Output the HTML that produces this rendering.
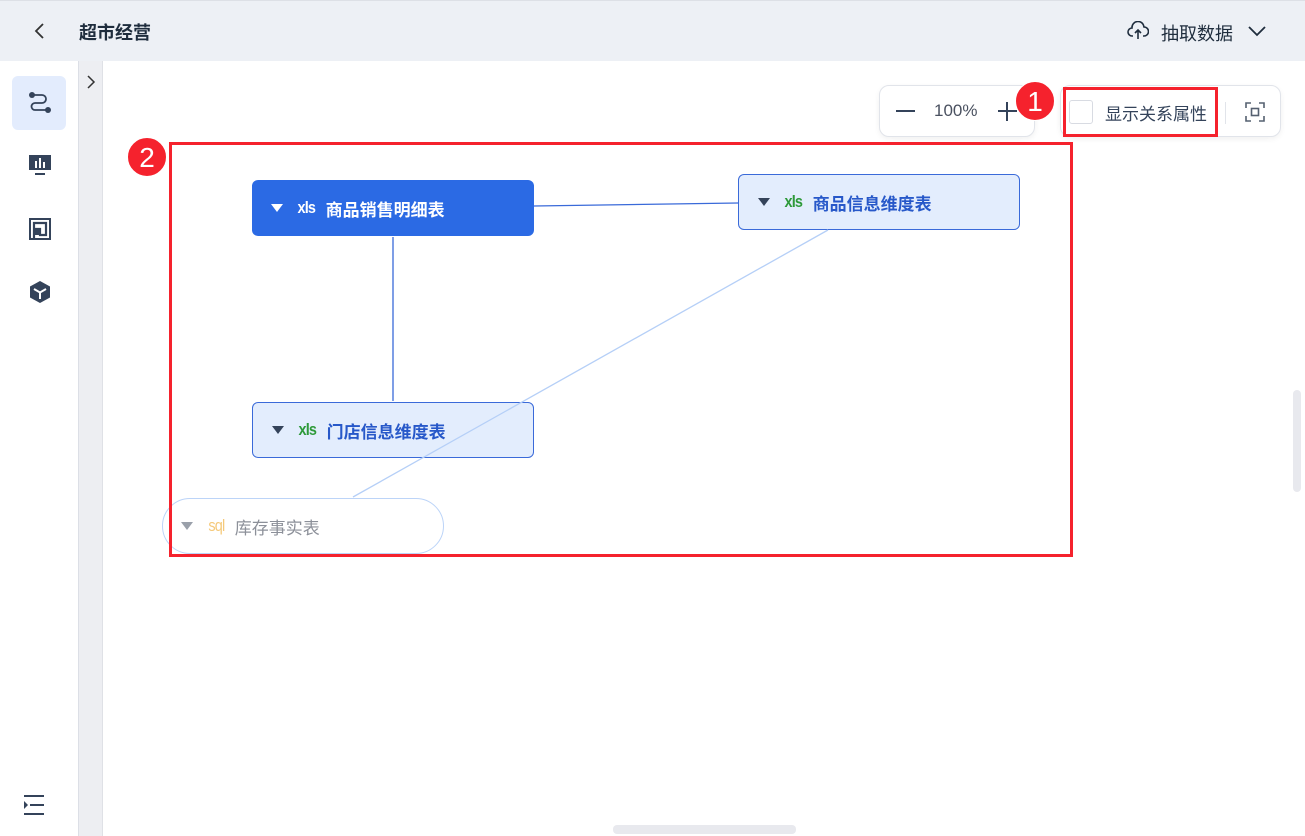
<!DOCTYPE html>
<html><head><meta charset="utf-8"><style>
*{margin:0;padding:0;box-sizing:border-box}
body{width:1305px;height:836px;overflow:hidden;background:#fff;font-family:"Liberation Sans","Noto Sans CJK SC",sans-serif;position:relative}
.abs{position:absolute}
.hdr{left:0;top:0;width:1305px;height:61px;background:#edf0f5;border-top:1px solid #dde0e6}
.node{position:absolute;height:56px;border-radius:6px;display:flex;align-items:center;font-size:17px;font-weight:bold}
.tri{width:0;height:0;border-left:6px solid transparent;border-right:6px solid transparent;border-top:8px solid #fff;margin:0 13px 0 19px}
.tag{font-size:17px;font-weight:bold;margin-right:9px;letter-spacing:-1px;transform:scaleX(.85);display:inline-block}
.badge{position:absolute;width:40px;height:40px;border-radius:50%;background:#f5222d;color:#fff;font-size:28px;text-align:center;line-height:40px;border:1px solid #fff}
</style></head><body>
<div class="abs hdr"></div>
<svg class="abs" style="left:33px;top:22px" width="14" height="18"><path d="M10 2 L3 9 L10 16" stroke="#333" stroke-width="1.8" fill="none"/></svg>
<div class="abs" style="left:79px;top:19px;font-size:18px;font-weight:bold;color:#1f2d3d">超市经营</div>
<svg class="abs" style="left:1127px;top:21px" width="22" height="20" viewBox="0 0 22 20"><path d="M6 15 H5 A4 4 0 0 1 5 7 A6 6 0 0 1 17 6 A4.5 4.5 0 0 1 17 15 H16" stroke="#1f2d3d" stroke-width="1.6" fill="none"/><path d="M11 18 V9 M8 12 L11 9 L14 12" stroke="#1f2d3d" stroke-width="1.6" fill="none"/></svg>
<div class="abs" style="left:1161px;top:20px;font-size:18px;color:#1f2d3d">抽取数据</div>
<svg class="abs" style="left:1247px;top:24px" width="20" height="14"><path d="M2 3 L10 11 L18 3" stroke="#1f2d3d" stroke-width="1.8" fill="none"/></svg>
<div class="abs" style="left:0;top:61px;width:79px;height:775px;background:#fff;border-right:1px solid #dcdfe6"></div>
<div class="abs" style="left:79px;top:61px;width:24px;height:775px;background:#edeef2;border-right:1px solid #dfe1e6"></div>
<svg class="abs" style="left:85px;top:74px" width="12" height="16"><path d="M3 2 L9 8 L3 14" stroke="#333" stroke-width="1.5" fill="none"/></svg>
<div class="abs" style="left:12px;top:76px;width:54px;height:54px;background:#e3ecfd;border-radius:6px"></div>
<svg class="abs" style="left:28px;top:91px" width="24" height="24" viewBox="0 0 24 24"><circle cx="4" cy="4" r="3" fill="#34435a"/><circle cx="20" cy="19" r="3" fill="#34435a"/><path d="M4 4 H14 A4 4 0 0 1 14 12 H7 A3.5 3.5 0 0 0 7 19 H20" stroke="#34435a" stroke-width="1.8" fill="none"/></svg>
<svg class="abs" style="left:29px;top:154px" width="22" height="22"><rect x="0" y="1" width="22" height="15" fill="#34435a"/><rect x="6" y="7" width="2" height="7" fill="#fff"/><rect x="10" y="4" width="2" height="10" fill="#fff"/><rect x="14" y="8" width="2" height="6" fill="#fff"/><rect x="6" y="19" width="10" height="2" fill="#34435a"/></svg>
<svg class="abs" style="left:29px;top:218px" width="22" height="22"><path d="M1 1 H21 V21 H1 Z" stroke="#34435a" stroke-width="2" fill="none"/><path d="M5 21 V5 H17 V17 H11 V11 H5" stroke="#34435a" stroke-width="2.2" fill="none"/><rect x="5" y="12" width="5" height="5" fill="#34435a"/></svg>
<svg class="abs" style="left:29px;top:280px" width="22" height="24" viewBox="0 0 22 24"><path d="M11 1 L21 6.5 V17.5 L11 23 L1 17.5 V6.5 Z" fill="#34435a"/><path d="M5 9 L11 12.5 L17 9 M11 12.5 V19" stroke="#fff" stroke-width="2" fill="none"/></svg>
<svg class="abs" style="left:22px;top:794px" width="24" height="22"><rect x="2" y="1" width="20" height="2" fill="#34435a"/><rect x="8" y="10" width="14" height="2" fill="#34435a"/><rect x="2" y="19" width="20" height="2" fill="#34435a"/><path d="M2 7 L6 11 L2 15 Z" fill="#34435a"/></svg>
<div class="abs" style="left:1293px;top:390px;width:8px;height:102px;background:#e8e9ee;border-radius:4px"></div>
<div class="abs" style="left:613px;top:825px;width:183px;height:9px;background:#e8e9ee;border-radius:4px"></div>
<div class="node" style="left:252px;top:180px;width:282px;background:#2b6ae4;color:#fff"><span class="tri"></span><span class="tag">xls</span>商品销售明细表</div>
<div class="node" style="left:738px;top:174px;width:282px;background:#e3edfd;border:1px solid #3a6ad9;color:#2758c9"><span class="tri" style="border-top-color:#34435a"></span><span class="tag" style="color:#2e9a3a">xls</span>商品信息维度表</div>
<div class="node" style="left:252px;top:402px;width:282px;background:#e3edfd;border:1px solid #3a6ad9;color:#2758c9"><span class="tri" style="border-top-color:#34435a"></span><span class="tag" style="color:#2e9a3a">xls</span>门店信息维度表</div>
<div class="node" style="left:162px;top:498px;width:282px;border-radius:28px;background:#fff;border:1px solid #bcd4f8;color:#8c9099;font-weight:normal"><span class="tri" style="border-top-color:#9aa0aa;margin-left:18px;margin-right:14px"></span><span class="tag" style="color:#f5c97a;font-weight:normal">sql</span>库存事实表</div>
<svg class="abs" style="left:0;top:0" width="1305" height="836"><line x1="534" y1="206" x2="738" y2="203" stroke="#3a6ad9" stroke-width="1.3"/><line x1="393" y1="237" x2="393" y2="401" stroke="#3a6ad9" stroke-width="1.3"/><line x1="828" y1="230" x2="353" y2="497" stroke="#b5cff7" stroke-width="1.3"/></svg>
<div class="abs" style="left:169px;top:142px;width:904px;height:415px;border:3px solid #f5222d"></div>
<div class="badge" style="left:127px;top:137px">2</div>
<div class="abs" style="left:879px;top:85px;width:156px;height:52px;background:#fff;border:1px solid #e1e4ea;border-radius:10px;box-shadow:0 2px 6px rgba(0,0,0,.06)"></div>
<div class="abs" style="left:896px;top:110px;width:19px;height:2px;background:#34435a"></div>
<div class="abs" style="left:934px;top:101px;font-size:17px;color:#4a5160">100%</div>
<div class="abs" style="left:998px;top:110px;width:19px;height:2px;background:#34435a"></div>
<div class="abs" style="left:1006px;top:102px;width:2px;height:19px;background:#34435a"></div>
<div class="abs" style="left:1060px;top:85px;width:221px;height:52px;background:#fff;border:1px solid #e1e4ea;border-radius:10px;box-shadow:0 2px 6px rgba(0,0,0,.06)"></div>
<div class="abs" style="left:1069px;top:100px;width:24px;height:24px;border:1px solid #d8dbe2;border-radius:3px"></div>
<div class="abs" style="left:1105px;top:100px;font-size:17px;color:#34435a">显示关系属性</div>
<div class="abs" style="left:1225px;top:102px;width:1px;height:22px;background:#e1e4ea"></div>
<svg class="abs" style="left:1245px;top:102px" width="20" height="20"><path d="M1 6 V1 H6 M14 1 H19 V6 M19 14 V19 H14 M6 19 H1 V14" stroke="#556070" stroke-width="1.6" fill="none"/><rect x="6.5" y="6.5" width="7" height="7" stroke="#556070" stroke-width="1.6" fill="none"/></svg>
<div class="abs" style="left:1063px;top:87px;width:155px;height:50px;border:3px solid #f5222d"></div>
<div class="badge" style="left:1015px;top:81px">1</div>
</body></html>
